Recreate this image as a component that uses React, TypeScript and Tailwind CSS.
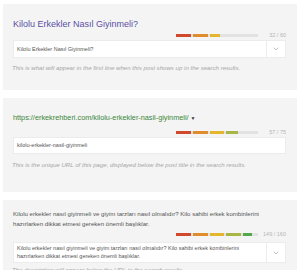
import React from "react";
import { ChevronDown } from "lucide-react";

const COLORS = ["#d2482b", "#e08b2c", "#e5b52d", "#a9b544", "#52a84b"];

function Bar({ value, max }: { value: number; max: number }) {
  const total = 82;
  const segW = 14.8;
  const step = 16.8;
  const fill = (value / max) * total;
  return (
    <div className="flex h-[3px] w-[82px] gap-[2px] bg-[#e2e2e2]">
      {COLORS.map((c, i) => {
        const start = i * step;
        const w = Math.max(0, Math.min(segW, fill - start));
        if (w <= 0) return null;
        return <div key={i} className="h-full shrink-0" style={{ width: w, backgroundColor: c }} />;
      })}
    </div>
  );
}

function Meter({ value, max }: { value: number; max: number }) {
  return (
    <div className="flex h-[6px] items-center justify-end">
      <Bar value={value} max={max} />
      <div className="w-[28px] text-right text-[5.5px] leading-[6px] text-[#b5b5b5]">
        {value} / {max}
      </div>
    </div>
  );
}

function Chev() {
  return (
    <div className="flex w-[19px] shrink-0 items-center justify-center self-stretch border-l border-[#ececec]">
      <ChevronDown size={8} strokeWidth={1.6} color="#888" />
    </div>
  );
}

export default function App() {
  return (
    <div
      className="flex h-[270px] w-[300px] flex-col gap-[8px] overflow-hidden bg-white px-[3px] pt-[4px]"
      style={{ fontFamily: '"Liberation Sans", Arial, sans-serif' }}
    >
      {/* Card 1 */}
      <div className="flex h-[86px] shrink-0 flex-col bg-[#f4f4f4] pl-[10px] pr-[11px] pt-[14px]">
        <div className="h-[12px] text-[9px] leading-[12px] text-[#5b4fa6]">Kilolu Erkekler Nasıl Giyinmeli?</div>
        <div className="mt-[2px]">
          <Meter value={32} max={60} />
        </div>
        <div className="mt-[2px] flex h-[18px] border border-[#ececec] bg-white">
          <div className="flex flex-1 items-center pl-[3px] text-[5.5px] text-[#555]">Kilolu Erkekler Nasıl Giyinmeli?</div>
          <Chev />
        </div>
        <div className="-ml-[1px] mt-[6px] h-[8px] text-[6.1px] italic leading-[8px] text-[#a6a6a6]">
          This is what will appear in the first line when this post shows up in the search results.
        </div>
      </div>

      {/* Card 2 */}
      <div className="flex h-[94px] shrink-0 flex-col bg-[#f4f4f4] pl-[10px] pr-[11px] pt-[15px]">
        <div className="h-[10px] text-[7.3px] leading-[10px] text-[#3b873b]">
          https://erkekrehberi.com/kilolu-erkekler-nasil-giyinmeli/<span className="ml-[2px] text-[5px] text-[#333]">▼</span>
        </div>
        <div className="mt-[6px]">
          <Meter value={57} max={75} />
        </div>
        <div className="mt-[2px] flex h-[17px] items-center border border-[#ececec] bg-white pl-[3px] text-[5.5px] text-[#555]">
          kilolu-erkekler-nasil-giyinmeli
        </div>
        <div className="-ml-[1px] mt-[7px] h-[8px] text-[6.1px] italic leading-[8px] text-[#a6a6a6]">
          This is the unique URL of this page, displayed below the post title in the search results.
        </div>
      </div>

      {/* Card 3 */}
      <div className="flex flex-1 flex-col bg-[#f4f4f4] pl-[10px] pr-[11px] pt-[9px]">
        <div className="text-[6.1px] leading-[10px] text-[#555]">
          Kilolu erkekler nasıl giyinmeli ve giyim tarzları nasıl olmalıdır? Kilo sahibi erkek kombinlerini
          <br />
          hazırlarken dikkat etmesi gereken önemli başlıklar.
        </div>
        <div className="mt-[2px]">
          <Meter value={149} max={160} />
        </div>
        <div className="mt-[5px] flex h-[21px] shrink-0 border border-[#ececec] bg-white">
          <div className="flex-1 pl-[3px] pt-[1px] text-[5.5px] leading-[8px] text-[#555]">
            Kilolu erkekler nasıl giyinmeli ve giyim tarzları nasıl olmalıdır? Kilo sahibi erkek kombinlerini
            <br />
            hazırlarken dikkat etmesi gereken önemli başlıklar.
          </div>
          <Chev />
        </div>
        <div className="-ml-[1px] mt-[3px] h-[8px] shrink-0 text-[6.1px] italic leading-[8px] text-[#a6a6a6]">
          The description will appear below the URL in the search results.
        </div>
      </div>
    </div>
  );
}
